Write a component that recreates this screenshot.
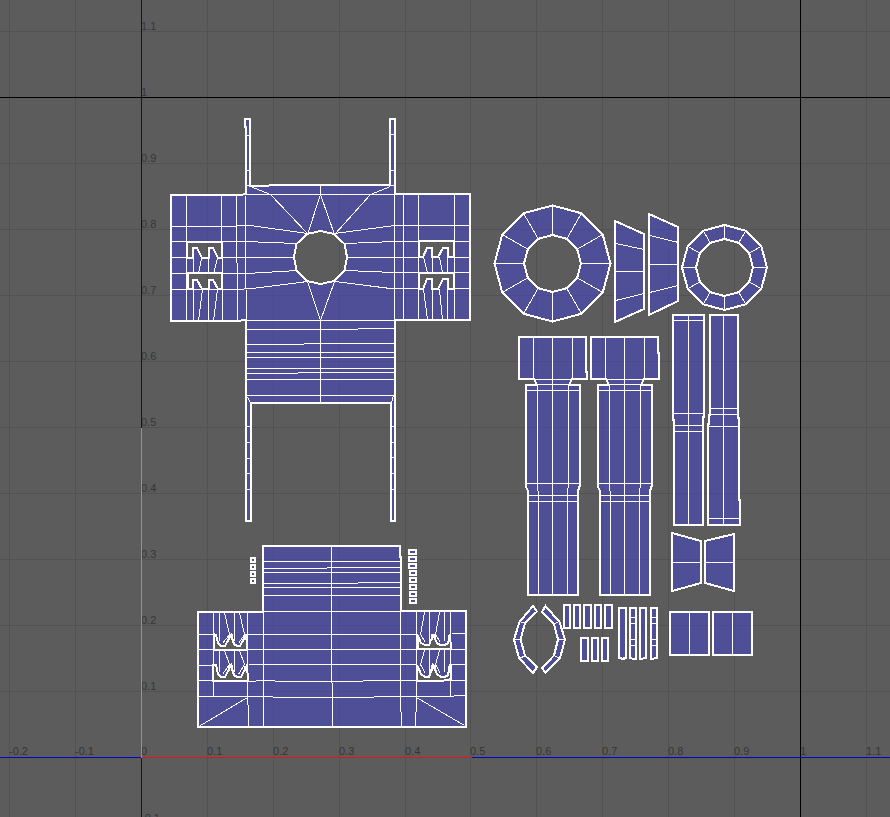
type Pt = [number, number]

// 0..1 UV space: origin sits at (141, 757), one tenth is about 66px
const tickX = (n: number) => Math.round(140.95 + 65.9 * n)
const tickY = (n: number) => 757 - 66 * n

const xTicks = [-2, -1, 0, 1, 2, 3, 4, 5, 6, 7, 8, 9, 10, 11]
const yTicks = [-1, 0, 1, 2, 3, 4, 5, 6, 7, 8, 9, 10, 11]

function ringPoints(cx: number, cy: number, r: number): Pt[] {
    return Array.from({ length: 12 }, (_, i) => {
        const a = (i * Math.PI) / 6
        return [cx + r * Math.cos(a), cy + r * Math.sin(a)] as Pt
    })
}

const toPath = (pts: Pt[]) => `M${pts.map((p) => p.join(" ")).join("L")}Z`

function Shell({ d, edges }: { d: string; edges?: string }) {
    return (
        <g>
            <path d={d} className="fill-[#4242d4]/50 stroke-white stroke-2" fillRule="evenodd" />
            {edges && <path d={edges} transform="translate(.5 .5)" className="fill-none stroke-white stroke-1" />}
        </g>
    )
}

function Box({ x, y, w, h, edges }: { x: number; y: number; w: number; h: number; edges?: string }) {
    return <Shell d={`M${x} ${y}h${w}v${h}h${-w}Z`} edges={edges} />
}

function Ring({ cx, cy, outer, inner }: { cx: number; cy: number; outer: number; inner: number }) {
    const o = ringPoints(cx, cy, outer)
    const n = ringPoints(cx, cy, inner)
    const spokes = o.map((p, i) => `M${p[0] - 0.5} ${p[1] - 0.5}L${n[i][0] - 0.5} ${n[i][1] - 0.5}`).join("")
    return <Shell d={toPath(o) + toPath(n)} edges={spokes} />
}

function Grid() {
    return (
        <g transform="translate(.5 .5)" className="fill-none stroke-[#525252] stroke-1">
            {xTicks.map((n) => <path key={n} d={`M${tickX(n)} -1V818`} />)}
            {yTicks.map((n) => <path key={n} d={`M-1 ${tickY(n)}H891`} />)}
        </g>
    )
}

function Axes() {
    return (
        <g transform="translate(.5 .5)" className="fill-none stroke-1">
            <path d="M-1 97H891M800 -1V818" className="stroke-black" />
            <path d="M-1 757H891M141 -1V818" className="stroke-[#0000c8]" />
            <path d="M141 757H471" className="stroke-[#e61414]" />
            <path d="M141 757V427" className="stroke-[#1ee61e]" />
        </g>
    )
}

function Labels() {
    return (
        <g className="fill-[#363636] font-['Liberation_Sans',Arial,sans-serif] text-[11px]">
            {xTicks.map((n) => <text key={n} x={tickX(n)} y={755}>{n / 10}</text>)}
            {yTicks.filter((n) => n !== 0).map((n) => (
                <text key={n} x={141} y={tickY(n) - 1}>{n / 10}</text>
            ))}
        </g>
    )
}

const bodyOutline =
    "M245 119H250V186L288 185H390V119H395V194H470V320H395V521H391V403H251V521H246V320L236 321H171V195H240L246 194V127H245Z" +
    // centre hole
    "M320.5 231L334 234L344.5 244L347 257L344.5 270.5L334 281L320.5 284L307 281L296.5 270.5L294 257L296.5 244L307 234Z" +
    // left slots
    "M187 242H222V258H218L213 248H209V258H202L197 248H193V258H187Z" +
    "M188 273H222V289H218L213 280H209V289H202L197 280H193V289H188Z" +
    // right slots
    "M419 241H454V257H448V248H443L438 257H432V248H427L423 257H419Z" +
    "M419 273H454V289H448V279H443L438 289H432V279H427L423 289H419Z"

const bodyEdges =
    // left sleeve
    "M186 195V321M221 195V242M222 242V321M236 195V262L237 263V321M245 195V288M246 289V320" +
    "M171 226H236L237 225H250L307 233M171 241H187M222 241H245L296 243M171 257H187M222 257H294" +
    "M171 273H188M222 273H246L297 270M171 289H235L252 288L307 281" +
    "M193 258V273M193 289V321M208 258V273M208 289V321" +
    "M201 258L198 273M217 258L213 273M202 289L198 320M217 289L213 320" +
    // right sleeve
    "M394 194V320M403 194V320M418 194V320M454 194V320M432 257V273M432 289V320M447 257V273M447 289V320" +
    "M470 225H394L334 233M470 241H454M419 241H394L345 243M470 257H454M419 257H347" +
    "M470 272H394L345 270M470 288H454M419 288H390L334 281" +
    "M423 257L427 272M439 257L442 272M423 289L427 319M439 289L442 319" +
    // collar and centre fan
    "M246 194H394M320 185V194L307 234M320 194L334 234M307 281L320 320L334 281M320 320V403M246 320H394" +
    "M250 186L270 194L307 233M390 186L370 194L335 233M246 185H250M390 185H394" +
    // lower block
    "M246 329H357M357 328H394M246 344H303M303 343H394M246 352H394M246 357H394M246 368H394M246 373H297M297 372H394M246 379H394M246 395H394" +
    "M247 397L250 402M393 395L391 402" +
    // straps
    "M246 135H250M246 170H250M390 134H395M390 170H395" +
    "M246 426H251M246 442H251M246 458H251M246 473H251M246 489H251" +
    "M391 426H395M391 442H395M391 457H395M391 473H395M391 489H395"

const backOutline =
    "M263 546H400V557H401V611H466V727H198V612H263Z" +
    "M214 634L216 635L218 643L221 646H225L231 635L234 644L237 646H240L246 635H247V650H214Z" +
    "M213 665H216L218 674L221 677H225L231 665L234 675L237 677H241L247 665L248 681H213Z" +
    "M417 634L421 643L425 645H429L433 635L437 643L440 645H445L448 643L450 634L451 649H418V636Z" +
    "M417 665L421 674L425 677H429L433 665L437 674L441 677H445L448 675L450 665H451V679L442 681H417Z"

// doubled rims where the slot walls fold over
const backRims =
    "M229 635H233M229 635V640M232 635V640M244 635L246 640M229 666H233M229 666V671M232 666V671M244 666L246 671" +
    "M417 635L419 640M431 635H435M432 635V640M435 635V640M449 635V640M417 666L419 671M431 666H435M432 666V671M435 666V671M449 666V671"

const backEdges =
    "M263 561H401M263 568H326M326 567H401M263 572H401M263 583H357M357 582H401M263 587H401M263 595H401M263 611H401" +
    "M198 634H213M247 634H415M451 633H466M198 649H466M198 665H213M248 664H415M451 664H466" +
    "M198 680H213M213 681H255M255 680H274M274 681H362M362 680H466" +
    "M198 696H272M272 697H373M373 696H453M453 695H466" +
    "M331 546V682M332 682V727M263 611V727M400 611V711M401 711V727M247 612V704M248 704V727M416 611V711M415 711V727" +
    "M213 612V696M450 611V696M219 612V640M219 649V671M234 612V640M234 649V671M429 611V640M429 649V671M444 611V640M444 649V671" +
    "M224 612L229 634L222 643M239 612L244 634L238 643M224 650L229 664L222 674M239 650L244 664L238 674" +
    "M424 612L420 634L425 642M439 612L435 634L440 642M424 650L420 664L425 673M439 650L435 664L440 673" +
    "M200 725L247 697M416 697L464 725"

const legEdges =
    "M533 337V379L537 385V490M538 490V595M552 337V595M572 337V379L568 385V487M567 487V595" +
    "M534 379H572M537 384H569M526 390H580M526 483H580M528 495H578M528 501H578"

export default function App() {
    return (
        <main className="h-screen w-full overflow-hidden bg-[#5c5c5c]">
            <svg
                viewBox="0 0 890 817"
                preserveAspectRatio="xMinYMin slice"
                shapeRendering="crispEdges"
                className="block h-full w-full"
                role="img"
                aria-label="UV layout"
            >
                <Grid />
                <Labels />
                <Axes />

                <Shell d={bodyOutline} edges={bodyEdges} />
                <Shell d={backOutline} edges={backEdges} />
                <path d={backRims} className="fill-none stroke-white stroke-2" />

                {[558, 565, 572, 579].map((y) => <Box key={y} x={251} y={y} w={4} h={4} />)}
                {[550, 557, 564].map((y) => <Box key={y} x={409} y={y} w={7} h={4} />)}
                {[571, 578, 585, 592, 599].map((y) => <Box key={y} x={410} y={y} w={6} h={4} />)}

                <Ring cx={552.5} cy={263.5} outer={58} inner={28.5} />
                <Ring cx={724.5} cy={267.5} outer={42.5} inner={28.5} />

                <Shell d="M615 221L644 234V309L615 322Z" edges="M615 271H644M615 243L644 249M615 300L644 293" />
                <Shell d="M649 214L678 227V301L649 315Z" edges="M649 264H678M649 235L678 242M649 292L678 285" />

                {/* legs */}
                <Shell
                    d="M519 337H586V372H587V379H572L569 385H580V485L578 491V595H528V491L526 487V385H537L534 379H519Z"
                    edges={legEdges}
                />
                <g transform="translate(72 0)">
                    <Shell
                        d="M519 337H586V353H587V379H572L569 385H580V485L578 491V595H528V491L526 487V385H537L534 379H519Z"
                        edges={legEdges}
                    />
                </g>

                <Shell
                    d="M673 315H704V417H703V525H674V420H673Z"
                    edges="M688 315V525M673 320H704M673 413H704M674 425H703M674 431H703"
                />
                <Shell
                    d="M710 315H738V418H739V500H740V525H708V424H709V415H710Z"
                    edges="M723 315V525M710 408H738M710 414H738M708 426H739M708 518H740"
                />

                <Shell d="M672 533L701 541V583L672 591Z" edges="M672 562H701" />
                <Shell d="M705 541L734 534V591L705 583Z" edges="M705 562H734" />

                <Box x={670} y={612} w={39} h={43} edges="M689 612V655" />
                <Box x={713} y={612} w={39} h={43} edges="M732 612V655" />

                {/* curved trims */}
                <Shell
                    d="M533 606L519.5 622L514 639.5L519 658L533 673L537 667L525 655.5L520.5 639.5L525 623L537 611.5Z"
                    edges="M519 621L525 623M514 639H520M519 658L525 655"
                />
                <Shell
                    d="M545.5 606L559.5 622L565 639.5L560 658L545.5 673L542 668L554 655.5L558 639.5L554 624L542 612Z"
                    edges="M554 623L559 621M558 639H564M554 655L559 658"
                />

                {/* small strips */}
                {[[564, 6], [574, 6], [584, 7], [595, 6], [605, 7]].map(([x, w]) => (
                    <Box key={x} x={x} y={605} w={w} h={23} />
                ))}
                {[[581, 7], [592, 6], [602, 6]].map(([x, w]) => (
                    <Box key={x} x={x} y={638} w={w} h={23} />
                ))}
                <Shell d="M619 608H626V658H624V659L619 658Z" />
                <Shell d="M630 608H636V659H634L630 658Z" edges="M630 617H636M630 623H636M630 639H636M630 645H636" />
                <Shell d="M640 608H646V658L640 659Z" />
                <Shell d="M651 608H657V658L651 659Z" edges="M651 617H657M651 623H657M651 639H657M651 645H657" />
            </svg>
        </main>
    )
}
